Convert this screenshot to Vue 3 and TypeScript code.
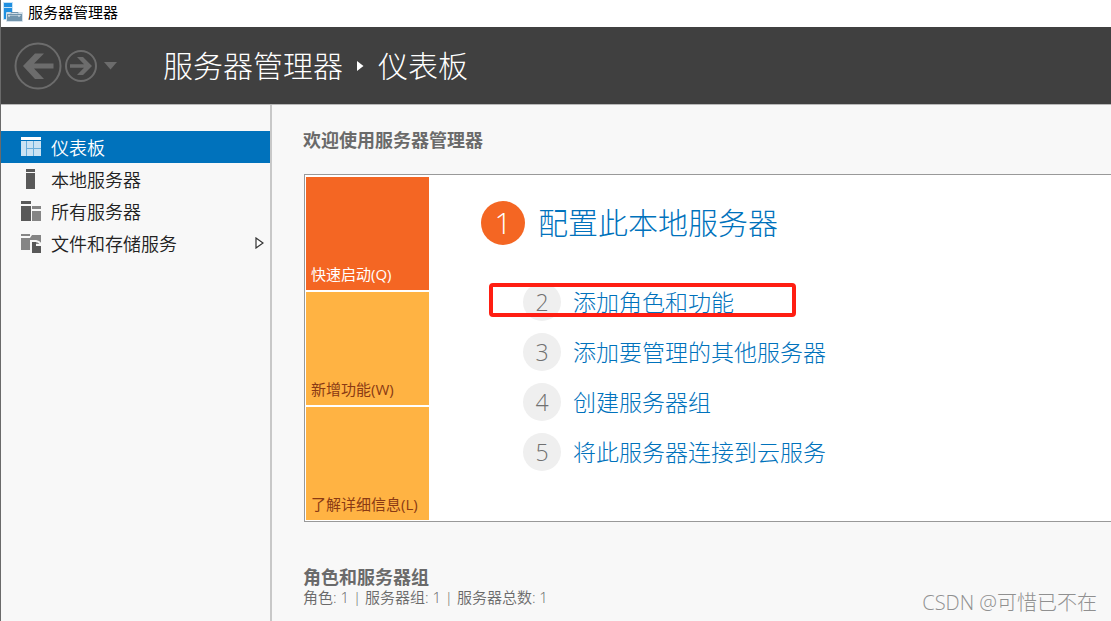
<script setup lang="ts">
import { ref } from 'vue'

interface NavItem {
  id: string
  label: string
  expandable?: boolean
}

interface Step {
  num: number
  label: string
  marked?: boolean
}

const navItems: NavItem[] = [
  { id: 'dashboard', label: '仪表板' },
  { id: 'local', label: '本地服务器' },
  { id: 'all', label: '所有服务器' },
  { id: 'files', label: '文件和存储服务', expandable: true },
]

const tiles = [
  { id: 'quick', label: '快速启动(Q)' },
  { id: 'new', label: '新增功能(W)' },
  { id: 'more', label: '了解详细信息(L)' },
]

const steps: Step[] = [
  { num: 2, label: '添加角色和功能', marked: true },
  { num: 3, label: '添加要管理的其他服务器' },
  { num: 4, label: '创建服务器组' },
  { num: 5, label: '将此服务器连接到云服务' },
]

const activeNav = ref('dashboard')
const activeTile = ref('quick')
</script>

<template>
  <div class="window">
    <div class="titlebar">
      <svg class="app-icon" width="20" height="20" viewBox="0 0 20 20" aria-hidden="true">
        <rect x="0" y="0" width="10" height="18" fill="#c4e2f7" />
        <rect x="1" y="1" width="8" height="4" fill="#1f8fe0" />
        <rect x="1" y="6" width="8" height="11" fill="#1f8fe0" />
        <rect x="3" y="10" width="17" height="10" rx="1" fill="#d3e0ea" />
        <path d="M8 11.500v-1h7v1" fill="none" stroke="#7295ad" />
        <rect x="4" y="12" width="15" height="7" fill="#7295ad" />
        <rect x="5" y="13" width="13" height="1" fill="#a9c0cf" />
        <path d="M6 13v2M16 13v2" stroke="#e8f0f5" />
      </svg>
      <span>服务器管理器</span>
    </div>

    <header class="header">
      <div class="history">
        <button type="button" class="icon-button" aria-label="后退">
          <svg width="48" height="48" viewBox="0 0 48 48">
            <circle cx="24" cy="24" r="22.500" fill="none" stroke="#6c6c6c" stroke-width="2" />
            <path d="M9 24 21 11.500h9L20 21.500h19.500v5H20L30 37h-9z" fill="#6c6c6c" />
          </svg>
        </button>
        <button type="button" class="icon-button" aria-label="前进">
          <svg width="34" height="34" viewBox="0 0 34 34">
            <circle cx="17" cy="17" r="15" fill="none" stroke="#6c6c6c" stroke-width="2" />
            <path d="M28 17 19 8h-6l7 7.200H6v3.600h14L13 26h6z" fill="#6c6c6c" />
          </svg>
        </button>
        <button type="button" class="icon-button caret" aria-label="历史记录">
          <svg width="13" height="8" viewBox="0 0 13 8"><path d="M0 0h13L6.500 7.500z" fill="#6c6c6c" /></svg>
        </button>
      </div>
      <h1 class="crumbs">
        <span>服务器管理器</span>
        <svg width="7" height="10" viewBox="0 0 7 10" aria-hidden="true"><path d="M0 0v10l6.500-5z" fill="#fff" /></svg>
        <span>仪表板</span>
      </h1>
    </header>

    <div class="body">
      <nav class="sidebar">
        <button
          v-for="item in navItems"
          :key="item.id"
          type="button"
          class="nav-item"
          :class="{ active: activeNav === item.id }"
          @click="activeNav = item.id"
        >
          <svg width="20" height="20" viewBox="0 0 20 20" aria-hidden="true">
            <g v-if="item.id === 'dashboard'">
              <rect width="20" height="3" fill="#fff" />
              <rect y="4" width="20" height="15" fill="#6aaedb" />
              <path d="M0 4h5v15H0zM6 4h6v7H6zM13 4h7v7h-7zM6 12h6v7H6zM13 12h7v7h-7z" fill="#cbe3f3" />
            </g>
            <g v-else-if="item.id === 'local'">
              <path d="M5 0h9v3H5zM5 4h9v16H5z" fill="#595959" />
            </g>
            <g v-else-if="item.id === 'all'">
              <path d="M0 0h10v3H0zM0 5h10v15H0z" fill="#595959" />
              <path d="M11 5h9v3h-9zM11 10h9v10h-9z" fill="#858585" />
            </g>
            <g v-else>
              <path d="M0 1h9v2H0zM0 5h9l2-3h9v9h-9v6H0z" fill="#858585" />
              <path d="M10 20V8h5q5 1 5 5" fill="none" stroke="#f8f8f8" stroke-width="2" />
              <path d="M11 9h4v4h5v7h-9z" fill="#595959" />
            </g>
          </svg>
          <span class="nav-label">{{ item.label }}</span>
          <svg v-if="item.expandable" width="9" height="12" viewBox="0 0 9 12" aria-hidden="true">
            <path d="M1 1v10l7-5z" fill="#fff" stroke="#333" stroke-width="1.200" />
          </svg>
        </button>
      </nav>

      <main class="content">
        <h2 class="section-title">欢迎使用服务器管理器</h2>

        <section class="welcome">
          <div class="tiles">
            <button
              v-for="tile in tiles"
              :key="tile.id"
              type="button"
              class="tile"
              :class="{ active: activeTile === tile.id }"
              @click="activeTile = tile.id"
            >
              {{ tile.label }}
            </button>
          </div>
          <div class="steps">
            <a href="#" class="step primary">
              <span class="num">1</span>
              <span>配置此本地服务器</span>
            </a>
            <ol class="step-list">
              <li v-for="step in steps" :key="step.num" class="step-row">
                <a href="#" class="step">
                  <span class="num">{{ step.num }}</span>
                  <span>{{ step.label }}</span>
                </a>
                <span v-if="step.marked" class="marker"></span>
              </li>
            </ol>
          </div>
        </section>

        <h2 class="section-title">角色和服务器组</h2>
        <p class="summary">角色: 1 | 服务器组: 1 | 服务器总数: 1</p>
        <div class="cards">
          <div v-for="n in 3" :key="n" class="card"></div>
        </div>
      </main>
    </div>

    <span class="watermark">CSDN @可惜已不在</span>
  </div>
</template>

<style>
body {
  margin: 0;
  overflow: hidden;
}
</style>

<style scoped>
.window {
  position: relative;
  box-sizing: border-box;
  display: flex;
  flex-direction: column;
  height: 100vh;
  overflow: hidden;
  border-left: 1px solid #6a6a6a;
  background: #f8f8f8;
  color: #222;
  font-family: "Open Sans", "Noto Sans CJK SC", sans-serif;
}

button {
  border: 0;
  padding: 0;
  background: none;
  color: inherit;
  font: inherit;
  cursor: pointer;
}

svg {
  display: block;
  flex: none;
}

.titlebar {
  display: flex;
  flex: none;
  align-items: center;
  gap: 5px;
  height: 27px;
  padding-left: 2px;
  padding-bottom: 4px;
  box-sizing: border-box;
  background: #fff;
  color: #000;
  font-size: 15px;
}

.header {
  display: flex;
  flex: none;
  align-items: center;
  height: 77px;
  padding-left: 13px;
  border-bottom: 1px solid #b8b8b8;
  background: #404040;
  color: #fff;
}

.history {
  display: flex;
  align-items: center;
  gap: 2px;
  width: 149px;
}

.caret {
  margin-left: 4px;
}

.crumbs {
  display: flex;
  align-items: center;
  gap: 14px;
  margin: 0;
  font-size: 30px;
  font-weight: 300;
  line-height: 40px;
}

.body {
  display: flex;
  flex: 1;
  min-height: 0;
}

.sidebar {
  flex: none;
  width: 269px;
  padding-top: 26px;
  border-right: 2px solid #c8c8c8;
}

.nav-item {
  display: flex;
  align-items: center;
  gap: 10px;
  box-sizing: border-box;
  width: 100%;
  height: 32px;
  padding: 0 6px 0 20px;
  font-size: 18px;
  font-weight: 350;
  text-align: left;
}

.nav-item.active {
  background: #0072bc;
  color: #fff;
}

.nav-label {
  flex: 1;
}

.content {
  flex: 1;
  min-width: 0;
  padding: 23px 0 0 31px;
}

.section-title {
  margin: 0;
  color: #6a6a6a;
  font-size: 18px;
  font-weight: 700;
  line-height: 24px;
}

.welcome {
  display: flex;
  margin: 22px 0 43px 1px;
  padding: 2px 0 1px 1px;
  border: 1px solid #999;
  border-right: 0;
  background: #fff;
}

.tiles {
  display: flex;
  flex: none;
  flex-direction: column;
  gap: 2px;
  width: 123px;
}

.tile {
  display: flex;
  align-items: flex-end;
  height: 113px;
  padding: 0 5px 5px;
  background: #ffb343;
  color: #8a3a14;
  font-size: 15px;
  line-height: 22px;
}

.tile.active {
  background: #f46623;
  color: #fff;
}

.steps {
  padding: 24px 0 0 52px;
}

.step {
  display: inline-flex;
  align-items: center;
  gap: 12px;
  color: #0072bc;
  font-size: 23px;
  font-weight: 300;
  line-height: 38px;
  text-decoration: none;
}

.num {
  width: 38px;
  height: 38px;
  border-radius: 50%;
  background: #efefef;
  color: #707070;
  text-align: center;
}

.primary {
  gap: 13px;
  font-size: 30px;
  line-height: 44px;
}

.primary .num {
  width: 44px;
  height: 44px;
  background: #f46623;
  color: #fff;
}

.step-list {
  display: flex;
  flex-direction: column;
  gap: 12px;
  margin: 38px 0 0;
  padding: 0 0 0 42px;
  list-style: none;
}

.step-row {
  position: relative;
  display: flex;
}

.marker {
  position: absolute;
  top: 0;
  left: -34px;
  box-sizing: border-box;
  width: 307px;
  height: 34px;
  border: 4px solid #ff1e12;
  border-radius: 4px;
  pointer-events: none;
}

.summary {
  margin: 0;
  color: #6a6a6a;
  font-size: 15px;
  font-weight: 350;
  line-height: 16px;
}

.cards {
  display: flex;
  gap: 21px;
  margin-top: 16px;
  padding-left: 2px;
  overflow: hidden;
}

.card {
  flex: 0 0 294px;
  height: 120px;
  border-top: 1px solid #999;
  background: #fff;
}

.watermark {
  position: absolute;
  right: 14px;
  bottom: 3px;
  color: #909090;
  font-size: 20px;
  font-weight: 300;
  line-height: 30px;
}
</style>
